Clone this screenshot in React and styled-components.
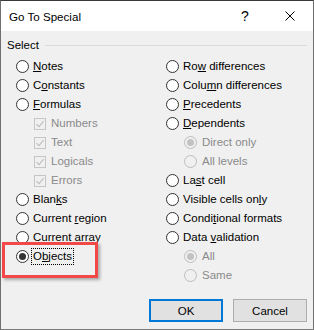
import React from "react";
import styled, { createGlobalStyle } from "styled-components";

const Global = createGlobalStyle`
  html, body { margin: 0; padding: 0; background: #f0f0f0; }
  body { font-family: "Liberation Sans", Arial, sans-serif; }
  * { box-sizing: border-box; }
`;

const Window = styled.div`
  width: 314px;
  height: 330px;
  display: flex;
  flex-direction: column;
  border-left: 1px solid #6f6f6f;
  border-right: 1px solid #6f6f6f;
  border-bottom: 1px solid #7a7a7a;
  border-top: 1px solid #3a3a3a;
  background: #f0f0f0;
  overflow: hidden;
`;

const TitleBar = styled.div`
  height: 30px;
  flex: none;
  display: flex;
  align-items: center;
  background: #fff;
  padding-left: 8px;
`;

const Title = styled.div`
  flex: 1;
  font-size: 11.6px;
  color: #000;
  padding-top: 1px;
`;

const TitleButton = styled.div`
  width: ${(p) => p.$w}px;
  height: 30px;
  display: flex;
  align-items: center;
  justify-content: center;
  font-size: 14px;
  color: #000;
`;

const Body = styled.div`
  flex: 1;
  display: flex;
  flex-direction: column;
`;

const Header = styled.div`
  margin-top: 6px;
  height: 15px;
  display: flex;
  align-items: center;
  padding-left: 6px;
  padding-right: 6px;
  gap: 6px;
  font-size: 11.5px;
  color: #000;
`;

const HeaderLine = styled.div`
  flex: 1;
  height: 1px;
  background: #dadada;
  margin-top: 1px;
`;

const Columns = styled.div`
  margin-top: 5px;
  padding-left: 15px;
  display: grid;
  grid-template-columns: 150px 1fr;
`;

const Column = styled.div`
  display: flex;
  flex-direction: column;
`;

const Row = styled.div`
  position: relative;
  height: 19px;
  display: flex;
  align-items: center;
  gap: ${(p) => (p.$sub ? 5 : 4)}px;
  padding-left: ${(p) => (p.$sub ? 18 : 0)}px;
  font-size: 11.5px;
  color: ${(p) => (p.$disabled ? "#8a8a8a" : "#000")};
  white-space: nowrap;
`;

const Radio = styled.span`
  width: 13px;
  height: 13px;
  flex: none;
  border-radius: 50%;
  border: 1px solid ${(p) => (p.$disabled ? "#bdbdbd" : "#333")};
  background: ${(p) => (p.$disabled ? "#f0f0f0" : "#fff")};
  display: flex;
  align-items: center;
  justify-content: center;
  &::after {
    content: "";
    width: 7px;
    height: 7px;
    border-radius: 50%;
    background: ${(p) => (p.$disabled ? "#c2c2c2" : "#333")};
    display: ${(p) => (p.$checked ? "block" : "none")};
  }
`;

const Check = styled.span`
  width: 12px;
  height: 12px;
  flex: none;
  border: 1px solid #c6c6c6;
  background: #f0f0f0;
  display: flex;
  align-items: center;
  justify-content: center;
`;

const Label = styled.span`
  outline: ${(p) => (p.$focus ? "1px dotted #000" : "none")};
  outline-offset: 1px;
  line-height: 13px;
`;

const Key = styled.span`
  text-decoration: underline;
  text-underline-offset: 1px;
`;

const Highlight = styled.div`
  position: absolute;
  left: -14px;
  top: -5px;
  width: 96px;
  height: 36px;
  border: 3px solid #f14848;
  box-shadow: 2px 2px 3px rgba(0, 0, 0, 0.3);
  pointer-events: none;
`;

const Buttons = styled.div`
  margin-top: auto;
  display: flex;
  justify-content: flex-end;
  gap: 10px;
  padding: 0 6px 7px 0;
`;

const Button = styled.div`
  width: 74px;
  height: 23px;
  display: flex;
  align-items: center;
  justify-content: center;
  background: #e1e1e1;
  border: ${(p) => (p.$default ? "2px solid #0078d7" : "1px solid #adadad")};
  font-size: 11.5px;
  color: #000;
`;

function label(text, key) {
  if (key == null) return text;
  return (
    <>
      {text.slice(0, key)}
      <Key>{text[key]}</Key>
      {text.slice(key + 1)}
    </>
  );
}

const CheckMark = () => (
  <svg width="10" height="10" viewBox="0 0 10 10">
    <path d="M1.5 5.2 L4 7.6 L8.6 2.2" fill="none" stroke="#bdbdbd" strokeWidth="1.1" />
  </svg>
);

const left = [
  { t: "Notes", k: 0 },
  { t: "Constants", k: 1 },
  { t: "Formulas", k: 0 },
  { t: "Numbers", sub: "check" },
  { t: "Text", sub: "check" },
  { t: "Logicals", sub: "check" },
  { t: "Errors", sub: "check" },
  { t: "Blanks", k: 4 },
  { t: "Current region", k: 8 },
  { t: "Current array", k: 8 },
  { t: "Objects", k: 1, checked: true, focus: true, highlight: true },
];

const right = [
  { t: "Row differences", k: 2 },
  { t: "Column differences", k: 4 },
  { t: "Precedents", k: 0 },
  { t: "Dependents", k: 0 },
  { t: "Direct only", sub: "radio", checked: true },
  { t: "All levels", sub: "radio" },
  { t: "Last cell", k: 2 },
  { t: "Visible cells only", k: 16 },
  { t: "Conditional formats", k: 5 },
  { t: "Data validation", k: 5 },
  { t: "All", sub: "radio", checked: true },
  { t: "Same", sub: "radio" },
];

function Item({ it }) {
  if (it.sub) {
    return (
      <Row $sub $disabled>
        {it.sub === "check" ? (
          <Check>
            <CheckMark />
          </Check>
        ) : (
          <Radio $disabled $checked={it.checked} />
        )}
        <Label>{it.t}</Label>
      </Row>
    );
  }
  return (
    <Row>
      <Radio $checked={it.checked} />
      <Label $focus={it.focus}>{label(it.t, it.k)}</Label>
      {it.highlight && <Highlight />}
    </Row>
  );
}

export default function App() {
  return (
    <>
      <Global />
      <Window>
        <TitleBar>
          <Title>Go To Special</Title>
          <TitleButton $w={44}>?</TitleButton>
          <TitleButton $w={46}>
            <svg width="10" height="10" viewBox="0 0 10 10">
              <path d="M0.5 0.5 L9.5 9.5 M9.5 0.5 L0.5 9.5" stroke="#000" strokeWidth="1" />
            </svg>
          </TitleButton>
        </TitleBar>
        <Body>
          <Header>
            <span>Select</span>
            <HeaderLine />
          </Header>
          <Columns>
            <Column>
              {left.map((it) => (
                <Item key={it.t} it={it} />
              ))}
            </Column>
            <Column>
              {right.map((it) => (
                <Item key={it.t} it={it} />
              ))}
            </Column>
          </Columns>
          <Buttons>
            <Button $default>OK</Button>
            <Button>Cancel</Button>
          </Buttons>
        </Body>
      </Window>
    </>
  );
}
